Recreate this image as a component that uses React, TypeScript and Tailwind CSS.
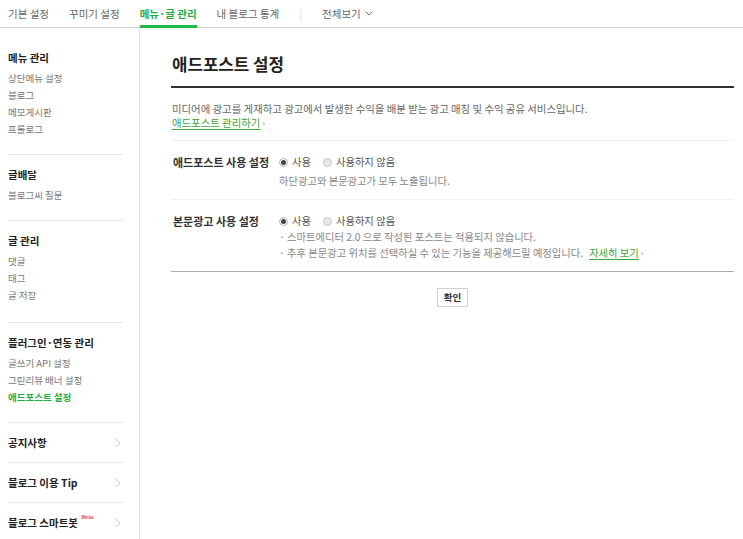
import React from "react";

const font = { fontFamily: '"Noto Sans CJK KR", "Noto Sans", sans-serif' };

function Chevron() {
  return (
    <svg width="6" height="10" viewBox="0 0 6 10" className="text-[#c8c8c8]">
      <path d="M1 1l4 4-4 4" fill="none" stroke="currentColor" strokeWidth="1" />
    </svg>
  );
}

function Radio({ checked }: { checked?: boolean }) {
  return checked ? (
    <span className="w-[9px] h-[9px] shrink-0 rounded-full border border-[#b5b5b5] bg-white flex items-center justify-center">
      <span className="w-[5px] h-[5px] rounded-full bg-[#444]" />
    </span>
  ) : (
    <span className="block w-[9px] h-[9px] shrink-0 rounded-full border border-[#c8c8c8] bg-[#e8e8e8]" />
  );
}

function Section({
  title,
  items,
  first,
  active,
  roomy,
}: {
  title: string;
  items: string[];
  first?: boolean;
  active?: string;
  roomy?: boolean;
}) {
  return (
    <div
      className={`border-b border-[#e6e6e6] ${roomy ? "pb-[18px]" : "pb-[16px]"} ${
        first ? "pt-[24px]" : "pt-[14px]"
      }`}
    >
      <div className="h-[12px] leading-[12px] text-[10.5px] font-bold text-[#222] mb-[6px]">{title}</div>
      {items.map((it) => (
        <div
          key={it}
          className={`h-[17px] leading-[17px] text-[9.5px] ${
            it === active ? "text-[#1fae44] font-bold" : "text-[#777]"
          }`}
        >
          {it}
        </div>
      ))}
    </div>
  );
}

function LinkRow({ title, beta }: { title: string; beta?: boolean }) {
  return (
    <div className="border-b border-[#e6e6e6] h-[40px] flex items-center justify-between pr-[2px]">
      <div className="text-[10.5px] font-bold text-[#222] leading-[12px] flex items-start">
        {title}
        {beta && (
          <span
            className="ml-[3px] -mt-[3px] text-[6.5px] italic text-[#e54b5a] leading-none"
            style={{ fontFamily: '"Liberation Serif", serif' }}
          >
            Beta
          </span>
        )}
      </div>
      <Chevron />
    </div>
  );
}

export default function App() {
  const tabs = ["기본 설정", "꾸미기 설정", "메뉴·글 관리", "내 블로그 통계"];
  return (
    <div className="w-[743px] h-[539px] bg-white overflow-hidden flex flex-col" style={font}>
      <div className="h-[28px] border-b border-[#d2d2d2] flex items-stretch pl-[8px] gap-[20px] text-[10.5px] shrink-0">
        {tabs.map((t) => (
          <div
            key={t}
            className={`flex items-center relative ${
              t === "메뉴·글 관리" ? "text-[#1fae44] font-bold" : "text-[#666]"
            }`}
          >
            {t}
            {t === "메뉴·글 관리" && (
              <span className="absolute left-0 right-0 -bottom-px h-[3px] bg-[#1fb944]" />
            )}
          </div>
        ))}
        <div className="flex items-center text-[#ddd]">|</div>
        <div className="flex items-center text-[#666] gap-[4px]">
          전체보기
          <svg width="8" height="5" viewBox="0 0 8 5">
            <path d="M0.5 0.5l3.5 3.5 3.5-3.5" fill="none" stroke="#777" strokeWidth="1" />
          </svg>
        </div>
      </div>

      <div className="flex flex-1 min-h-0">
        <aside className="w-[140px] shrink-0 border-r border-[#e2e2e2] pl-[8px] pr-[16px]">
          <Section first title="메뉴 관리" items={["상단메뉴 설정", "블로그", "메모게시판", "프롤로그"]} />
          <Section title="글배달" items={["블로그씨 질문"]} />
          <Section roomy title="글 관리" items={["댓글", "태그", "글 저장"]} />
          <Section
            title="플러그인·연동 관리"
            items={["글쓰기 API 설정", "그린리뷰 배너 설정", "애드포스트 설정"]}
            active="애드포스트 설정"
          />
          <LinkRow title="공지사항" />
          <LinkRow title="블로그 이용 Tip" />
          <LinkRow title="블로그 스마트봇" beta />
        </aside>

        <main className="flex-1 pl-[31px] pr-[9px] pt-[27px]">
          <h1 className="text-[16.8px] font-bold text-[#222] leading-[18px] pl-[1px] pb-[13px] border-b-2 border-[#333]">
            애드포스트 설정
          </h1>
          <div className="pt-[14px] pb-[10px] border-b border-[#f0f0f0] pl-[1px] text-[10.4px] leading-[14px]">
            <p className="text-[#666]">
              미디어에 광고를 게재하고 광고에서 발생한 수익을 배분 받는 광고 매칭 및 수익 공유 서비스입니다.
            </p>
            <p className="flex items-center gap-[2px]">
              <span className="text-[#3da534] underline underline-offset-2">애드포스트 관리하기</span>
              <span className="text-[#3da534] text-[8px]">›</span>
            </p>
          </div>

          <div className="flex pt-[13px] pb-[10px] border-b border-[#eeeeee] text-[10.3px]">
            <div className="w-[108px] pl-[2px] font-bold text-[#333] leading-[16px] text-[11px]">애드포스트 사용 설정</div>
            <div>
              <div className="flex items-center h-[16px] text-[#555]">
                <Radio checked />
                <span className="ml-[4px]">사용</span>
                <span className="ml-[12px]">
                  <Radio />
                </span>
                <span className="ml-[4px]">사용하지 않음</span>
              </div>
              <div className="h-[19px] leading-[22px] text-[#888]">하단광고와 본문광고가 모두 노출됩니다.</div>
            </div>
          </div>

          <div className="flex pt-[13px] pb-[10px] border-b border-[#aaa] text-[10.3px]">
            <div className="w-[108px] pl-[2px] font-bold text-[#333] leading-[16px] text-[11px]">본문광고 사용 설정</div>
            <div>
              <div className="flex items-center h-[16px] text-[#555]">
                <Radio checked />
                <span className="ml-[4px]">사용</span>
                <span className="ml-[12px]">
                  <Radio />
                </span>
                <span className="ml-[4px]">사용하지 않음</span>
              </div>
              <div className="h-[16px] leading-[16px] text-[#888]">· 스마트에디터 2.0 으로 작성된 포스트는 적용되지 않습니다.</div>
              <div className="h-[16px] leading-[16px] text-[#888] flex items-center">
                · 추후 본문광고 위치를 선택하실 수 있는 기능을 제공해드릴 예정입니다.
                <span className="ml-[6px] text-[#3da534] underline underline-offset-2">자세히 보기</span>
                <span className="ml-[2px] text-[#3da534] text-[8px]">›</span>
              </div>
            </div>
          </div>

          <div className="flex justify-center pt-[16px]">
            <button className="h-[19px] px-[6px] border border-[#d0d0d0] bg-white text-[9.5px] font-bold text-[#333] leading-none">
              확인
            </button>
          </div>
        </main>
      </div>
    </div>
  );
}
